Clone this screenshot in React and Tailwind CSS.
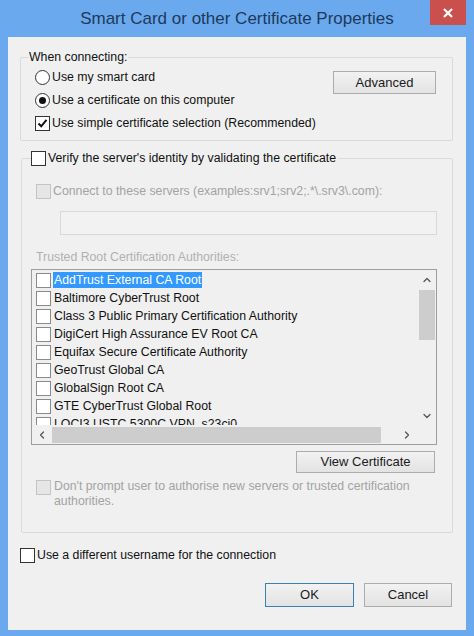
import React from 'react'
import { ChevronUp, ChevronDown, ChevronLeft, ChevronRight } from 'lucide-react'

const certs = [
  'AddTrust External CA Root',
  'Baltimore CyberTrust Root',
  'Class 3 Public Primary Certification Authority',
  'DigiCert High Assurance EV Root CA',
  'Equifax Secure Certificate Authority',
  'GeoTrust Global CA',
  'GlobalSign Root CA',
  'GTE CyberTrust Global Root',
  'LOCI3 USTC 5300C VPN_s23ci0',
]

const Check = ({ checked, disabled, list }) => {
  let cls = 'bg-white border-[#333333]'
  if (disabled) cls = 'bg-[#e6e6e6] border-[#c4c4c4]'
  if (list) cls = 'bg-white border-[#8a8a8a]'
  return (
    <span className={`w-[15px] h-[15px] shrink-0 border flex items-center justify-center ${cls}`}>
      {checked && (
        <svg width="11" height="11" viewBox="0 0 11 11">
          <path d="M1.5 5.5 L4.2 8.3 L9.5 1.8" fill="none" stroke="#111" strokeWidth="2" />
        </svg>
      )}
    </span>
  )
}

const Radio = ({ checked }) => (
  <span className="w-[15px] h-[15px] shrink-0 rounded-full border border-[#333333] bg-white flex items-center justify-center">
    {checked && <span className="w-[7px] h-[7px] rounded-full bg-[#111]"></span>}
  </span>
)

const Button = ({ children, className = '', focused }) => (
  <button
    className={`border ${
      focused ? 'border-[#3c7fb1]' : 'border-[#acacac]'
    } bg-linear-to-b from-[#f2f2f2] to-[#e3e3e3] text-[13px] text-[#1a1a1a] flex items-center justify-center ${className}`}
  >
    {children}
  </button>
)

const App = () => {
  return (
    <div className="w-[474px] h-[636px] bg-[#6ba9ee] relative font-['Liberation_Sans',Arial,sans-serif] text-[12.3px] text-[#111]">
      {/* title bar */}
      <div className="h-[37px] flex items-center justify-center text-[17px] text-[#1d3a5a]">
        Smart Card or other Certificate Properties
      </div>
      <div className="absolute right-[8px] top-0 w-[36px] h-[25px] bg-[#c9504c] flex items-center justify-center">
        <svg width="10" height="10" viewBox="0 0 10 10">
          <path d="M1 1 L9 9 M9 1 L1 9" stroke="#fff" strokeWidth="2.2" />
        </svg>
      </div>

      <div className="ml-[8px] w-[458px] h-[593px] bg-[#f0f0f0] pl-[12px] pr-[13px] flex flex-col">
        {/* When connecting */}
        <fieldset className="mt-[13px] h-[91px] border border-[#dadada] rounded-[2px]">
          <legend className="ml-[7px] px-[1px] leading-[14px]">When connecting:</legend>
          <div className="flex justify-between pl-[14px] pr-[16px]">
            <div className="flex flex-col mt-[2px]">
              <div className="h-[23px] flex items-center gap-[2px]">
                <Radio />
                <span>Use my smart card</span>
              </div>
              <div className="h-[23px] flex items-center gap-[2px]">
                <Radio checked />
                <span>Use a certificate on this computer</span>
              </div>
              <div className="h-[23px] flex items-center gap-[2px]">
                <Check checked />
                <span>Use simple certificate selection (Recommended)</span>
              </div>
            </div>
            <Button className="mt-[7px] w-[103px] h-[23px]">Advanced</Button>
          </div>
        </fieldset>

        {/* Verify server */}
        <fieldset className="mt-[10px] ml-[1px] h-[382px] border border-[#dadada] rounded-[2px] flex flex-col">
          <legend className="ml-[9px] pr-[2px] flex items-center gap-[2px] leading-[15px]">
            <Check />
            <span>Verify the server's identity by validating the certificate</span>
          </legend>
          <div className="flex flex-col">
            <div className="mt-[15px] h-[20px] pl-[14px] flex items-center gap-[2px] text-[#a3a3a3]">
              <Check disabled />
              <span>Connect to these servers (examples:srv1;srv2;.*\.srv3\.com):</span>
            </div>
            <div className="mt-[10px] ml-[38px] w-[377px] h-[24px] border border-[#d9d9d9] bg-[#f2f2f2]"></div>
            <div className="mt-[14px] h-[16px] pl-[14px] flex items-center text-[#b0b0b0]">
              Trusted Root Certification Authorities:
            </div>

            {/* list */}
            <div className="mt-[4px] ml-[9px] w-[406px] h-[176px] border border-[#9d9d9d] bg-[#f0f0f0] flex flex-col overflow-hidden">
              <div className="flex h-[155px]">
                <div className="flex-1 overflow-hidden pl-[4px] pt-[1px]">
                  {certs.map((c, i) => (
                    <div key={c} className="h-[18px] flex items-center gap-[2px] whitespace-nowrap">
                      <Check list />
                      <span
                        className={`px-[1px] leading-[16px] ${
                          i === 0 ? 'bg-[#3399ff] text-white' : 'text-[#111]'
                        }`}
                      >
                        {c}
                      </span>
                    </div>
                  ))}
                </div>
                <div className="w-[19px] flex flex-col items-center">
                  <div className="h-[19px] flex items-center justify-center">
                    <ChevronUp size={12} strokeWidth={2.5} color="#555" />
                  </div>
                  <div className="mt-[1px] w-[16px] h-[50px] bg-[#cdcdcd]"></div>
                  <div className="flex-1"></div>
                  <div className="h-[19px] flex items-center justify-center">
                    <ChevronDown size={12} strokeWidth={2.5} color="#555" />
                  </div>
                </div>
              </div>
              <div className="flex h-[19px]">
                <div className="flex-1 flex items-center">
                  <div className="w-[20px] flex items-center justify-center">
                    <ChevronLeft size={12} strokeWidth={2.5} color="#555" />
                  </div>
                  <div className="w-[329px] h-[16px] bg-[#cdcdcd]"></div>
                  <div className="flex-1 flex items-center justify-end pr-[4px]">
                    <ChevronRight size={12} strokeWidth={2.5} color="#555" />
                  </div>
                </div>
                <div className="w-[19px]"></div>
              </div>
            </div>

            <Button className="mt-[6px] self-end mr-[17px] w-[139px] h-[22px]">View Certificate</Button>

            <div className="mt-[6px] pl-[14px] flex items-start gap-[3px] text-[#a3a3a3]">
              <span className="mt-[1px]">
                <Check disabled />
              </span>
              <span className="leading-[15px] w-[370px]">
                Don't prompt user to authorise new servers or trusted certification authorities.
              </span>
            </div>
          </div>
        </fieldset>

        <div className="mt-[14px] h-[16px] flex items-center gap-[2px]">
          <Check />
          <span>Use a different username for the connection</span>
        </div>

        <div className="mt-[20px] flex justify-end gap-[10px] mr-[1px]">
          <Button focused className="w-[89px] h-[24px]">OK</Button>
          <Button className="w-[88px] h-[24px]">Cancel</Button>
        </div>
      </div>
    </div>
  )
}

export default App
